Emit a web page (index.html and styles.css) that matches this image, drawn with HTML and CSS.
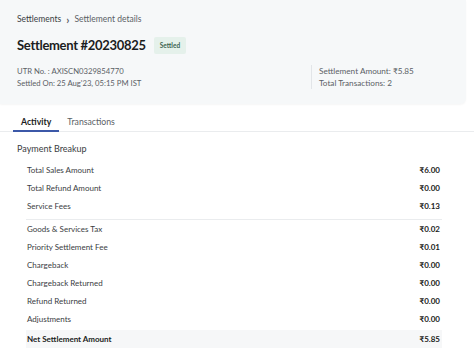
FILE: index.html
```html
<!DOCTYPE html>
<html lang="en">
<head>
    <meta charset="UTF-8">
    <meta name="viewport" content="width=device-width, initial-scale=1.0">
    <title>Settlement Details</title>
    <link rel="stylesheet" href="styles.css">
</head>
<body>
    <div class="page-header">
        <div class="breadcrumb">
            <span>Settlements</span>
            <span class="crumb-sep">&rsaquo;</span>
            <span>Settlement details</span>
        </div>

        <div class="title-row">
            <h1 class="page-title">Settlement #20230825</h1>
            <span class="status-badge">Settled</span>
        </div>

        <div class="meta">
            <div class="meta-col">
                <div class="meta-line">UTR No. : AXISCN0329854770</div>
                <div class="meta-line">Settled On: 25 Aug'23, 05:15 PM IST</div>
            </div>
            <div class="meta-col meta-col-right">
                <div class="meta-line">Settlement Amount: ₹5.85</div>
                <div class="meta-line">Total Transactions: 2</div>
            </div>
        </div>
    </div>

    <div class="tabs">
        <div class="tab active">Activity</div>
        <div class="tab">Transactions</div>
    </div>

    <div class="section">
        <div class="section-title">Payment Breakup</div>

        <div class="breakup">
            <div class="breakup-row"><span>Total Sales Amount</span><span class="amount">₹6.00</span></div>
            <div class="breakup-row"><span>Total Refund Amount</span><span class="amount">₹0.00</span></div>
            <div class="breakup-row group-end"><span>Service Fees</span><span class="amount">₹0.13</span></div>
            <div class="breakup-row"><span>Goods &amp; Services Tax</span><span class="amount">₹0.02</span></div>
            <div class="breakup-row"><span>Priority Settlement Fee</span><span class="amount">₹0.01</span></div>
            <div class="breakup-row"><span>Chargeback</span><span class="amount">₹0.00</span></div>
            <div class="breakup-row"><span>Chargeback Returned</span><span class="amount">₹0.00</span></div>
            <div class="breakup-row"><span>Refund Returned</span><span class="amount">₹0.00</span></div>
            <div class="breakup-row"><span>Adjustments</span><span class="amount">₹0.00</span></div>
            <div class="breakup-row total"><span>Net Settlement Amount</span><span class="amount">₹5.85</span></div>
        </div>
    </div>
</body>
</html>
```

FILE: styles.css
```css
:root {
    --header-bg: #f6f8f9;
    --text-dark: #1b1d21;
    --text-color: #3a3d42;
    --text-muted: #5b5f66;
    --border-color: #eaecee;
    --accent-color: #3c58a8;
    --badge-bg: #e5f1eb;
    --badge-text: #3c6452;
}

* {
    margin: 0;
    padding: 0;
    box-sizing: border-box;
    font-family: 'Lato', 'Liberation Sans', sans-serif;
}

body {
    background-color: white;
    color: var(--text-color);
}

.page-header {
    width: 466px;
    background-color: var(--header-bg);
    border-bottom-right-radius: 6px;
    box-shadow: 0 1px 2px rgba(0, 0, 0, 0.04);
    padding: 13px 17px 15px;
}

.breadcrumb {
    display: flex;
    align-items: center;
    gap: 5px;
    font-size: 8.5px;
    color: var(--text-muted);
    height: 12px;
}

.breadcrumb span:first-child {
    color: var(--text-color);
}

.crumb-sep {
    font-size: 11px;
    font-weight: 700;
    line-height: 1;
}

.title-row {
    display: flex;
    align-items: center;
    gap: 8px;
    margin-top: 11px;
    height: 18px;
}

.page-title {
    font-size: 13px;
    font-weight: 700;
    letter-spacing: -0.3px;
    color: var(--text-dark);
}

.status-badge {
    background-color: var(--badge-bg);
    color: var(--badge-text);
    font-size: 6.5px;
    font-weight: 700;
    padding: 5px 6px;
    border-radius: 2px;
}

.meta {
    display: flex;
    margin-top: 11px;
}

.meta-col {
    width: 294px;
}

.meta-col-right {
    width: auto;
    border-left: 1px solid #e2e5e8;
    padding-left: 7px;
}

.meta-line {
    font-size: 7.7px;
    line-height: 12px;
    color: var(--text-muted);
}

.meta-col-right .meta-line {
    font-size: 8.2px;
}

.tabs {
    display: flex;
    margin-top: 7px;
    padding-left: 13px;
    border-bottom: 1px solid var(--border-color);
}

.tab {
    font-size: 8.7px;
    color: var(--text-muted);
    padding: 5px 8px 3px;
    border-bottom: 2px solid transparent;
    margin-bottom: -1px;
}

.tab.active {
    color: var(--text-dark);
    font-weight: 700;
    border-bottom-color: var(--accent-color);
}

.section {
    padding: 11px 17px 0;
}

.section-title {
    font-size: 9px;
    color: var(--text-color);
    line-height: 12px;
}

.breakup {
    width: 416px;
    margin: 6px 0 0 9px;
}

.breakup-row {
    display: flex;
    justify-content: space-between;
    align-items: center;
    height: 18px;
    padding: 0 2px 0 1px;
    font-size: 8px;
    color: var(--text-color);
}

.breakup-row.group-end {
    border-bottom: 1px solid var(--border-color);
    height: 23px;
    padding-bottom: 4px;
}

.breakup-row.total {
    background-color: #f6f7f8;
    font-weight: 700;
    color: var(--text-dark);
    margin-top: 2px;
}

.amount {
    font-weight: 700;
    color: var(--text-dark);
}
```
